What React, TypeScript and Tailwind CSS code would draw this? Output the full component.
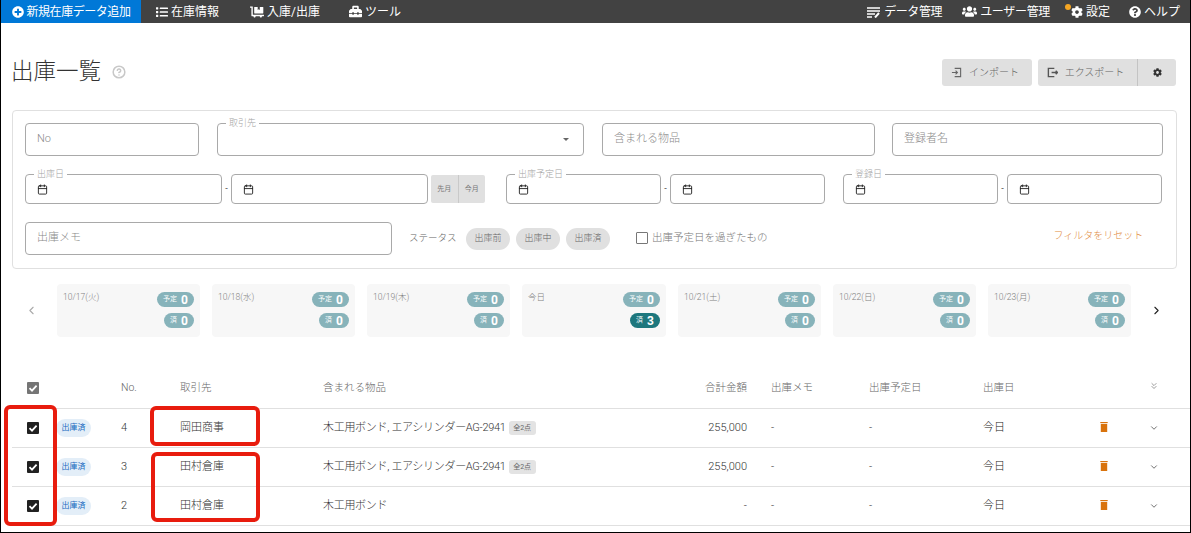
import React from "react";
import { FaPlusCircle, FaList, FaDollyFlatbed, FaToolbox, FaUsers, FaCog, FaQuestionCircle } from "react-icons/fa";
import { ChevronLeft, ChevronRight, ChevronDown, ChevronsDown, Calendar, CircleHelp } from "lucide-react";

const FONT = "font-['Roboto','Noto_Sans_CJK_JP',sans-serif]";
const GRID = "grid grid-cols-[44px_65px_59px_143px_300px_124px_122px_114px_115px_50px_29px] items-center";

function NavItem({ icon, label, className = "" }: { icon: React.ReactNode; label: string; className?: string }) {
  return (
    <div className={`flex items-center gap-[3px] text-[12px] text-white ${className}`}>
      {icon}
      <span>{label}</span>
    </div>
  );
}

function Box({ w, h, label, placeholder, children, className = "" }: { w: string; h: string; label?: string; placeholder?: string; children?: React.ReactNode; className?: string }) {
  return (
    <div className={`relative flex items-center rounded-[4px] border border-[#a9a9a9] px-[11px] ${w} ${h} ${className}`}>
      {label && (
        <span className="absolute left-[8px] top-[-6px] bg-white px-[3px] text-[9px] leading-[11px] font-light text-[#a3a3a3]">{label}</span>
      )}
      {placeholder && <span className="text-[11px] font-light text-[#8a8a8a]">{placeholder}</span>}
      {children}
    </div>
  );
}

function DateRange({ label, w }: { label: string; w: string }) {
  return (
    <div className="flex items-center">
      <Box w={w} h="h-[30px]" label={label}><Calendar size={11} strokeWidth={2} className="text-[#222]" /></Box>
      <span className="w-[9px] text-center text-[9px] text-[#444]">-</span>
      <Box w={w} h="h-[30px]"><Calendar size={11} strokeWidth={2} className="text-[#222]" /></Box>
    </div>
  );
}

function Chip({ label }: { label: string }) {
  return <span className="flex h-[22px] w-[44px] items-center justify-center rounded-full bg-[#e0e0e0] text-[9px] font-light text-[#666]">{label}</span>;
}

function Pill({ label, n, dark = false }: { label: string; n: number; dark?: boolean }) {
  return (
    <span className={`flex h-[15px] items-center gap-[4px] rounded-full px-[6px] ${dark ? "bg-[#1d777d]" : "bg-[#87b3ba]"}`}>
      <span className="text-[7px] text-white">{label}</span>
      <span className="text-[12px] font-bold leading-none text-white">{n}</span>
    </span>
  );
}

function DayCard({ date, w, done = 0 }: { date: string; w: string; done?: number }) {
  return (
    <div className={`flex h-[53px] justify-between rounded-[4px] bg-[#f7f7f7] py-[8px] pl-[6px] pr-[6px] ${w}`}>
      <span className="text-[8.5px] font-light leading-[10px] text-[#808080]">{date}</span>
      <div className="flex flex-col items-end gap-[6px]">
        <Pill label="予定" n={0} />
        <Pill label="済" n={done} dark={done > 0} />
      </div>
    </div>
  );
}

function Check({ dark = true }: { dark?: boolean }) {
  return (
    <span className={`flex h-[12px] w-[12px] items-center justify-center rounded-[1px] ${dark ? "bg-[#212121]" : "bg-[#757575]"}`}>
      <svg viewBox="0 0 12 12" className="h-[12px] w-[12px]" fill="none" stroke="#fff" strokeWidth="1.8"><path d="M2.5 6.2 5 8.6 9.6 3.6" /></svg>
    </span>
  );
}

function Trash() {
  return (
    <svg viewBox="0 0 8 10" className="mb-[2px] h-[10px] w-[8px]" fill="#d9730d">
      <rect x="0.3" y="0" width="7.4" height="1.1" />
      <rect x="0.8" y="1.9" width="6.4" height="8.1" />
    </svg>
  );
}

function Row({ no, partner, items, more, amount }: { no: number; partner: string; items: string; more?: boolean; amount: string }) {
  return (
    <div className={`${GRID} h-[39px] border-b border-[#e0e0e0] text-[11px] font-light text-[#333]`}>
      <div className="flex justify-center pr-[2px]"><Check /></div>
      <div><span className="flex h-[18px] w-[35px] items-center justify-center rounded-full bg-[#e3eef8] text-[8px] font-normal text-[#1769c0]">出庫済</span></div>
      <div>{no}</div>
      <div>{partner}</div>
      <div className="flex items-center gap-[3px]">
        <span className="tracking-[-0.3px]">{items}</span>
        {more && <span className="flex h-[14px] w-[27px] items-center justify-center rounded-[3px] bg-[#e3e3e3] text-[7px] font-normal text-[#666]">全2点</span>}
      </div>
      <div className="text-right">{amount}</div>
      <div className="pl-[24px]">-</div>
      <div>-</div>
      <div className="text-[#222]">今日</div>
      <div className="pl-[2px]"><Trash /></div>
      <div><ChevronDown size={10} className="ml-[1px] text-[#555]" /></div>
    </div>
  );
}

export default function App() {
  return (
    <div className={`relative h-[533px] w-[1191px] overflow-hidden border-x border-b border-black bg-white ${FONT}`}>
      <header className="flex h-[23px] items-center justify-between bg-[#424242]">
        <div className="flex h-full items-center">
          <NavItem className="h-full w-[140px] justify-center bg-[#0078d7] tracking-[-0.45px]" icon={<FaPlusCircle size={12} />} label="新規在庫データ追加" />
          <NavItem className="ml-[15px]" icon={<FaList size={12} />} label="在庫情報" />
          <NavItem className="ml-[31px]" icon={<FaDollyFlatbed size={14} />} label="入庫/出庫" />
          <NavItem className="ml-[29px] gap-[2px]" icon={<FaToolbox size={13} />} label="ツール" />
        </div>
        <div className="flex h-full items-center pr-[10px]">
          <NavItem className="gap-[2px] tracking-[-0.4px]" icon={<svg viewBox="0 0 14 12" className="h-[12px] w-[14px]" fill="none" stroke="#fff" strokeWidth="1.3"><path d="M0 2h13M0 5h13M0 8h8M0 11h5" /><path d="M12 7 8 11.5" strokeWidth="2" /></svg>} label="データ管理" />
          <NavItem className="ml-[20px] tracking-[-0.33px]" icon={<FaUsers size={15} />} label="ユーザー管理" />
          <div className="relative ml-[21px]">
            <span className="absolute left-[-6px] top-[1px] h-[6px] w-[6px] rounded-full bg-[#f5a623]" />
            <NavItem icon={<FaCog size={12} />} label="設定" />
          </div>
          <NavItem className="ml-[19px]" icon={<FaQuestionCircle size={12} />} label="ヘルプ" />
        </div>
      </header>

      <main className="pl-[11px]">
        <section className="flex h-[87px] items-center justify-between">
          <div className="ml-[-1px] flex items-center gap-[11px] pt-[10px]">
            <h1 className="text-[22.5px] font-light leading-none text-[#333]">出庫一覧</h1>
            <CircleHelp size={14} strokeWidth={2.6} className="text-[#c8c8c8]" />
          </div>
          <div className="mr-[14px] mt-[11px] flex gap-[6px]">
            <button className="flex h-[27px] w-[90px] items-center justify-center gap-[7px] rounded-[3px] bg-[#e0e0e0] pr-[4px] text-[10px] font-light text-[#666]">
              <svg viewBox="0 0 12 12" className="h-[11px] w-[11px]" fill="none" stroke="#666" strokeWidth="1.2"><path d="M4 1.5h6.5v9H4M1 6h6M5 4l2 2-2 2" /></svg>
              インポート
            </button>
            <div className="flex h-[27px] w-[138px] rounded-[3px] bg-[#e0e0e0] text-[10px] font-light text-[#666]">
              <button className="flex w-[100px] items-center justify-center gap-[7px] border-r border-[#c4c4c4] pr-[4px]">
                <svg viewBox="0 0 12 12" className="h-[11px] w-[11px]" fill="none" stroke="#555" strokeWidth="1.5"><path d="M8 1.5H1.5v9H8M5 6h6.5M9.5 4l2 2-2 2" /></svg>
                エクスポート
              </button>
              <button className="flex flex-1 items-center justify-center"><FaCog size={9} className="text-[#333]" /></button>
            </div>
          </div>
        </section>

        <section className="h-[159px] w-[1165px] rounded-[4px] border border-[#e0e0e0] px-[12px] pt-[12px]">
          <div className="flex">
            <Box w="w-[174px]" h="h-[33px]" placeholder="No" />
            <Box w="w-[367px] ml-[18px]" h="h-[33px]" label="取引先" className="justify-end">
              <span className="mr-[3px] h-0 w-0 border-x-[3px] border-t-[3px] border-x-transparent border-t-[#666]" />
            </Box>
            <Box w="w-[273px] ml-[18px]" h="h-[33px]" placeholder="含まれる物品" />
            <Box w="w-[271px] ml-[17px]" h="h-[33px]" placeholder="登録者名" />
          </div>
          <div className="mt-[18px] flex items-center">
            <DateRange label="出庫日" w="w-[197px]" />
            <div className="ml-[3px] flex h-[28px] w-[54px] rounded-[2px] bg-[#e0e0e0] text-[7px] text-[#777]">
              <span className="flex flex-1 items-center justify-center border-r border-[#c9c9c9]">先月</span>
              <span className="flex flex-1 items-center justify-center">今月</span>
            </div>
            <div className="ml-[21px]"><DateRange label="出庫予定日" w="w-[155px]" /></div>
            <div className="ml-[18px]"><DateRange label="登録日" w="w-[155px]" /></div>
          </div>
          <div className="mt-[18px] flex items-center">
            <Box w="w-[367px]" h="h-[33px]" placeholder="出庫メモ" />
            <span className="ml-[17px] w-[47px] whitespace-nowrap text-[9.5px] font-light text-[#666]">ステータス</span>
            <div className="ml-[10px] flex gap-[6px]">
              <Chip label="出庫前" />
              <Chip label="出庫中" />
              <Chip label="出庫済" />
            </div>
            <span className="mb-[2px] ml-[26px] h-[12px] w-[12px] rounded-[1px] border border-[#777]" />
            <span className="mb-[2px] ml-[4px] text-[10.5px] font-light text-[#777]">出庫予定日を過ぎたもの</span>
            <span className="mb-[7px] ml-[286px] text-[10px] font-light text-[#e08a3c]">フィルタをリセット</span>
          </div>
        </section>

        <section className="mt-[15px] flex items-center">
          <div className="flex w-[45px] justify-start pl-[13px]"><ChevronLeft size={13} className="text-[#aaa]" /></div>
          <div className="flex gap-[12px]">
            <DayCard date="10/17(火)" w="w-[143px]" />
            <DayCard date="10/18(水)" w="w-[143px]" />
            <DayCard date="10/19(木)" w="w-[143px]" />
            <DayCard date="今日" w="w-[144px]" done={3} />
            <DayCard date="10/21(土)" w="w-[143px]" />
            <DayCard date="10/22(日)" w="w-[143px]" />
            <DayCard date="10/23(月)" w="w-[143px]" />
          </div>
          <div className="ml-[19px]"><ChevronRight size={13} className="text-[#222]" /></div>
        </section>

        <section className="mt-[32px]">
          <div className={`${GRID} h-[40px] border-b border-[#e0e0e0] pb-[2px] text-[10.5px] font-light text-[#666]`}>
            <div className="flex justify-center pr-[2px]"><Check dark={false} /></div>
            <div />
            <div>No.</div>
            <div>取引先</div>
            <div>含まれる物品</div>
            <div className="text-right">合計金額</div>
            <div className="pl-[24px]">出庫メモ</div>
            <div>出庫予定日</div>
            <div>出庫日</div>
            <div />
            <div className="mb-[3px]"><ChevronsDown size={10} className="ml-[1px] text-[#888]" /></div>
          </div>
          <Row no={4} partner="岡田商事" items="木工用ボンド, エアシリンダーAG-2941" more amount="255,000" />
          <Row no={3} partner="田村倉庫" items="木工用ボンド, エアシリンダーAG-2941" more amount="255,000" />
          <Row no={2} partner="田村倉庫" items="木工用ボンド" amount="-" />
        </section>
      </main>

      <div className="absolute left-[3px] top-[405px] h-[121px] w-[53px] rounded-[6px] border-[4px] border-[#e81c0e]" />
      <div className="absolute left-[149px] top-[406px] h-[40px] w-[110px] rounded-[6px] border-[4px] border-[#e81c0e]" />
      <div className="absolute left-[150px] top-[452px] h-[70px] w-[109px] rounded-[6px] border-[4px] border-[#e81c0e]" />
    </div>
  );
}
